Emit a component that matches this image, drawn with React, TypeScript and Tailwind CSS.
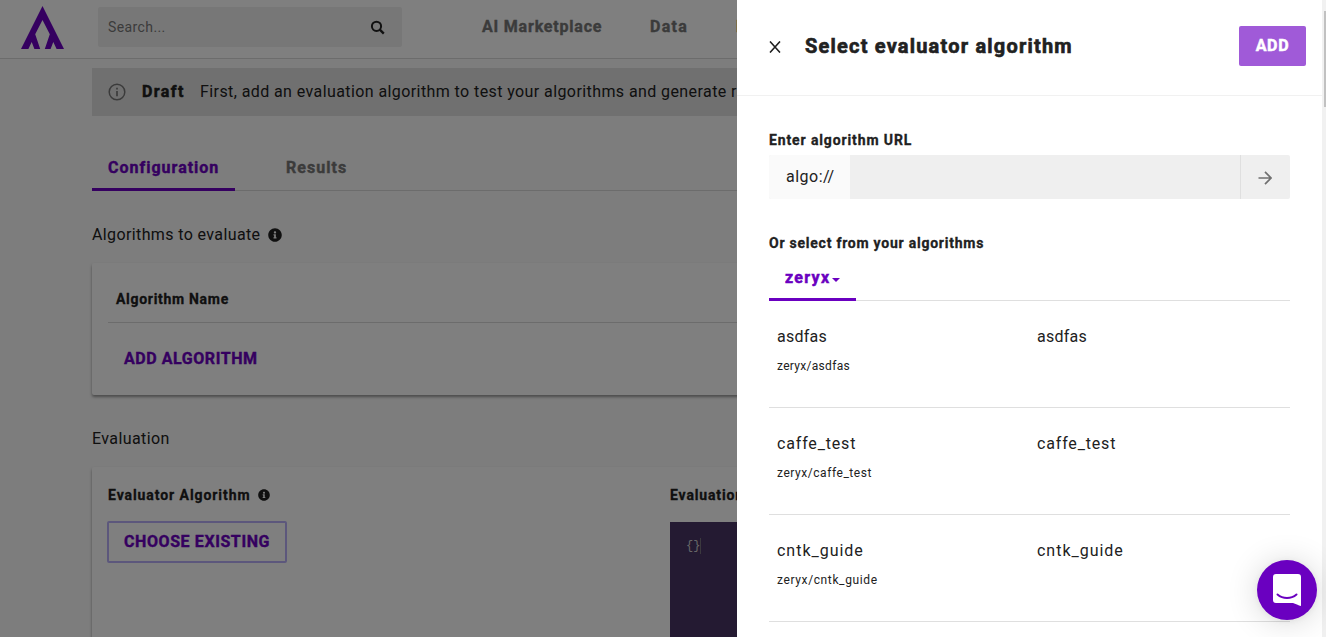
import React from "react";
import { FaInfoCircle } from "react-icons/fa";

const algorithms = [
  { name: "asdfas", path: "zeryx/asdfas", nameCls: "tracking-[0.25px]", pathCls: "tracking-[0.3px]" },
  { name: "caffe_test", path: "zeryx/caffe_test", nameCls: "tracking-[0.83px]", pathCls: "tracking-[0.55px]" },
  { name: "cntk_guide", path: "zeryx/cntk_guide", nameCls: "tracking-[0.98px]", pathCls: "tracking-[0.62px]" },
];

function Logo() {
  return (
    <svg className="ml-[21px] mt-[6px] h-[43px] w-[43px] shrink-0" viewBox="0 0 43 43" fill="#6a00c0">
      <path d="M21.5 0 L43 43 H35.6 L32.3 36 L29.6 43 H23.8 L28.8 28.2 L21.5 14 L14.2 28.2 L19.2 43 H13.4 L10.7 36 L7.4 43 H0 Z" />
    </svg>
  );
}

function Header() {
  return (
    <header className="flex h-[59px] shrink-0 items-start border-b border-[#d8d8d8] bg-white">
      <Logo />
      <div className="ml-[34px] mt-[7px] flex h-10 w-[304px] shrink-0 items-center rounded-[2px] bg-[#efefef] pl-[10px] pr-[17px]">
        <span className="text-[14px] tracking-[0.4px] text-[#777]">Search...</span>
        <svg className="ml-auto h-[15px] w-[15px]" viewBox="0 0 15 15" fill="none" stroke="#212121" strokeWidth="2">
          <circle cx="6.5" cy="6.3" r="4.6" />
          <path d="M9.8 9.6 L13.8 13.6" strokeWidth="2.4" />
        </svg>
      </div>
      <nav className="ml-20 mt-[15px] flex gap-12 text-[16px] font-bold leading-6 text-[#777] [-webkit-text-stroke:0.4px]">
        <span className="w-[120px] whitespace-nowrap tracking-[0.8px]">AI Marketplace</span>
        <span className="w-[38px] whitespace-nowrap tracking-[1.3px]">Data</span>
        <span className="text-[#c09040]">Pricing</span>
      </nav>
    </header>
  );
}

function Banner() {
  return (
    <div className="ml-[92px] mt-[9px] flex h-12 shrink-0 items-center bg-[#e0e0e0] pl-4 text-[16px] leading-6 text-[#212121]">
      <svg className="h-[18px] w-[18px] shrink-0" viewBox="0 0 18 18" fill="none" stroke="#777" strokeWidth="1.5">
        <circle cx="9" cy="9" r="7.8" />
        <path d="M9 8 V13.2 M9 4.7 V6.4" strokeWidth="1.7" />
      </svg>
      <span className="ml-4 w-[58px] shrink-0 font-bold tracking-[1.4px] [-webkit-text-stroke:0.5px]">Draft</span>
      <span className="whitespace-nowrap tracking-[0.41px]">
        First, add an evaluation algorithm to test your algorithms and generate results
      </span>
    </div>
  );
}

function Page() {
  return (
    <div className="flex h-full w-full flex-col overflow-hidden bg-[#fafafa]">
      <Header />
      <Banner />
      <div className="ml-[92px] mt-7 flex h-[47px] shrink-0 items-end border-b border-[#d8d8d8]">
        <div className="-mb-px flex h-[47px] w-[143px] border-b-3 border-[#6a00c0] pl-4 pt-[12px] text-[16px] font-bold leading-6 text-[#6a00c0] [-webkit-text-stroke:0.4px]">
          <span className="tracking-[1px]">Configuration</span>
        </div>
        <div className="-mb-px ml-[51px] h-[47px] pt-[12px] text-[16px] font-bold leading-6 text-[#777] [-webkit-text-stroke:0.4px]">
          <span className="tracking-[1.05px]">Results</span>
        </div>
      </div>
      <div className="ml-[92px] mt-8 flex h-6 shrink-0 items-center gap-2 text-[16px] leading-6 text-[#212121]">
        <span className="tracking-[0.38px]">Algorithms to evaluate</span>
        <FaInfoCircle className="h-[14px] w-[14px]" />
      </div>
      <section className="ml-[92px] mt-4 h-[132px] shrink-0 rounded-[2px] bg-white px-4 pt-6 shadow-[0_2px_3px_rgba(0,0,0,0.4)]">
        <div className="h-9 border-b border-[#d8d8d8] pl-2 text-[14px] font-bold leading-6 text-[#212121] [-webkit-text-stroke:0.3px]">
          <span className="tracking-[0.7px]">Algorithm Name</span>
        </div>
        <div className="pl-4 pt-6 text-[16px] font-bold leading-6 text-[#6a00c0] [-webkit-text-stroke:0.4px]">
          <span className="tracking-[0.56px]">ADD ALGORITHM</span>
        </div>
      </section>
      <div className="ml-[92px] mt-[32px] shrink-0 text-[16px] leading-6 text-[#212121]">
        <span className="tracking-[0.4px]">Evaluation</span>
      </div>
      <section className="ml-[92px] mt-[16px] flex h-[200px] shrink-0 rounded-[2px] bg-white pl-[15px] pt-4 shadow-[0_2px_3px_rgba(0,0,0,0.4)]">
        <div className="w-[563px] shrink-0 text-[#212121]">
          <div className="flex items-center gap-[7px] pl-px text-[14px] font-bold leading-6 [-webkit-text-stroke:0.3px]">
            <span className="tracking-[0.93px]">Evaluator Algorithm</span>
            <FaInfoCircle className="h-[12px] w-[12px]" />
          </div>
          <div className="mt-[14px] flex h-[42px] w-[180px] items-center justify-center rounded-[2px] border-2 border-[#b8aff8] text-[16px] font-bold text-[#6a00c0] [-webkit-text-stroke:0.4px]">
            <span className="tracking-[0.6px]">CHOOSE EXISTING</span>
          </div>
        </div>
        <div className="flex-1">
          <div className="text-[14px] font-bold leading-6 text-[#212121] [-webkit-text-stroke:0.3px]">
            <span className="tracking-[0.85px]">Evaluation Settings</span>
          </div>
          <div className="mt-[15px] flex h-[150px] items-start bg-[#483464] pl-4 pt-4 font-['Liberation_Mono',monospace] text-[12px] leading-4 text-[#d0d0d0]">
            <span className="border-r border-[#77727d] bg-transparent">{"{}"}</span>
          </div>
        </div>
      </section>
    </div>
  );
}

function Panel() {
  return (
    <aside className="absolute right-0 top-0 flex h-full w-[589px] bg-white text-[#212121]">
      <div className="w-[585px]">
        <div className="flex h-24 items-start border-b border-[#f1f1f1] pl-8">
          <svg className="mt-[41px] h-3 w-3" viewBox="0 0 12 12" stroke="#212121" strokeWidth="1.5">
            <path d="M1 0.4 L11 11.6 M11 0.4 L1 11.6" />
          </svg>
          <h1 className="ml-6 mt-[32px] text-[20px] font-bold leading-7 [-webkit-text-stroke:0.6px]">
            <span className="tracking-[1.2px]">Select evaluator algorithm</span>
          </h1>
          <button className="ml-auto mr-4 mt-[26px] h-10 w-[67px] rounded-[2px] bg-[#a05ad8] text-[16px] font-bold leading-6 tracking-[0.7px] text-white [-webkit-text-stroke:0.5px]">
            ADD
          </button>
        </div>
        <div className="pl-8 pr-8 pt-8">
          <div className="text-[14px] font-bold leading-6 [-webkit-text-stroke:0.3px]">
            <span className="tracking-[0.88px]">Enter algorithm URL</span>
          </div>
          <div className="mt-[3px] flex h-11 overflow-hidden rounded-[2px] bg-[#efefef]">
            <div className="w-[81px] bg-[#fafafa] pl-[17px] pt-[10px] text-[16px] leading-6">
              <span className="tracking-[0.5px]">algo:</span>
              <span className="-tracking-[0.4px]">//</span>
            </div>
            <div className="flex-1" />
            <div className="flex w-[50px] items-center justify-center border-l border-[#dfdfdf] pr-[2px]">
              <svg className="mt-px h-[14px] w-[14px]" viewBox="0 0 14 14" fill="none" stroke="#707070" strokeWidth="1.7">
                <path d="M0.5 7 H12.8 M7 0.9 L13 7 L7 13.1" />
              </svg>
            </div>
          </div>
          <div className="mt-8 text-[14px] font-bold leading-6 [-webkit-text-stroke:0.3px]">
            <span className="tracking-[0.76px]">Or select from your algorithms</span>
          </div>
          <div className="flex h-[46px] border-b border-[#dfdfdf]">
            <div className="flex h-[46px] w-[87px] border-b-3 border-[#6a00c0] pl-4 pt-[11px] text-[16px] font-bold leading-6 text-[#6a00c0]">
              <span className="w-[47px] tracking-[1.3px] [-webkit-text-stroke:0.5px]">zeryx</span>
              <svg className="mt-[12px] h-1 w-2" viewBox="0 0 8 4" fill="#6a00c0">
                <path d="M0 0 H8 L4 4 Z" />
              </svg>
            </div>
          </div>
          {algorithms.map((a) => (
            <div key={a.path} className="flex h-[107px] border-b border-[#dfdfdf] pl-2 pt-6">
              <div className="w-[260px]">
                <div className={"text-[16px] leading-6 " + a.nameCls}>{a.name}</div>
                <div className={"mt-2 text-[12px] leading-[18px] " + a.pathCls}>{a.path}</div>
              </div>
              <div className={"text-[16px] leading-6 " + a.nameCls}>{a.name}</div>
            </div>
          ))}
        </div>
      </div>
      <div className="flex h-full w-1 justify-end bg-[#f1f1f1] pt-[11px]">
        <div className="h-24 w-[2px] bg-[#c1c1c1]" />
      </div>
    </aside>
  );
}

export default function App() {
  return (
    <div className="relative h-[637px] w-[1326px] overflow-hidden font-[Roboto,sans-serif]">
      <Page />
      <div className="absolute inset-0 bg-black/50" />
      <Panel />
      <div className="absolute bottom-[17px] right-[9px] flex h-[60px] w-[60px] items-center justify-center rounded-full bg-[#6a00c0] shadow-[0_1px_6px_rgba(0,0,0,0.06),0_2px_32px_rgba(0,0,0,0.16)]">
        <svg className="h-8 w-7" viewBox="0 0 28 32">
          <path d="M3 0 H25 A3 3 0 0 1 28 3 V32 C25.5 31.3 22.5 30 20 29 H3 A3 3 0 0 1 0 26 V3 A3 3 0 0 1 3 0 Z" fill="#fff" />
          <path d="M4.5 20.5 C10 25.2 18 25.2 23.5 20.5" fill="none" stroke="#6a00c0" strokeWidth="2" strokeLinecap="round" />
        </svg>
      </div>
    </div>
  );
}
